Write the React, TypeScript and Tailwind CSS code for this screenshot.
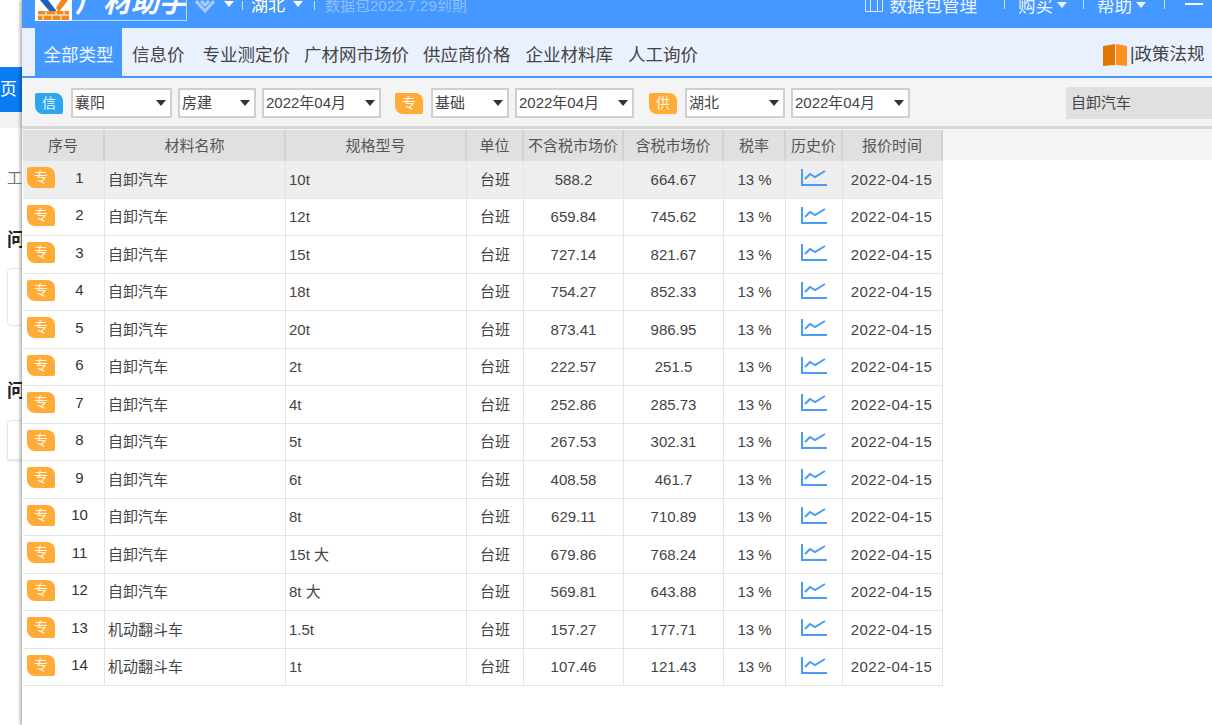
const FONT = "font-['Liberation_Sans','Noto_Sans_CJK_SC',sans-serif]";

const SPECS = [
  ["自卸汽车", "10t", "588.2", "664.67"],
  ["自卸汽车", "12t", "659.84", "745.62"],
  ["自卸汽车", "15t", "727.14", "821.67"],
  ["自卸汽车", "18t", "754.27", "852.33"],
  ["自卸汽车", "20t", "873.41", "986.95"],
  ["自卸汽车", "2t", "222.57", "251.5"],
  ["自卸汽车", "4t", "252.86", "285.73"],
  ["自卸汽车", "5t", "267.53", "302.31"],
  ["自卸汽车", "6t", "408.58", "461.7"],
  ["自卸汽车", "8t", "629.11", "710.89"],
  ["自卸汽车", "15t 大", "679.86", "768.24"],
  ["自卸汽车", "8t 大", "569.81", "643.88"],
  ["机动翻斗车", "1.5t", "157.27", "177.71"],
  ["机动翻斗车", "1t", "107.46", "121.43"],
];

function Badge({ label, color }: { label: string; color: string }) {
  return (
    <span
      className={`flex h-[21px] w-[28px] shrink-0 items-center justify-center rounded-tr-[8px] rounded-bl-[8px] rounded-tl-[2px] rounded-br-[2px] text-[14px] text-white/90 ${color}`}
    >
      {label}
    </span>
  );
}

function Select({ value, w }: { value: string; w: string }) {
  return (
    <div className={`flex h-[30px] items-center justify-between border-2 border-[#cfcfcf] bg-white pr-[4px] pl-[2px] text-[15px] text-[#444] ${w}`}>
      <span className="mt-[1px]">{value}</span>
      <span className="h-0 w-0 border-x-[5px] border-t-[6px] border-x-transparent border-t-[#333]" />
    </div>
  );
}

function TrendIcon() {
  return (
    <svg width="26" height="18" viewBox="0 0 26 18" fill="none" stroke="#4a9bf5">
      <path d="M1 0v16h25" strokeWidth="2" />
      <path d="M4 10l5-5 5 3 10-6" strokeWidth="2" />
    </svg>
  );
}

function Logo() {
  return (
    <div className="flex h-[21px] w-[37px] items-end justify-center bg-white">
      <svg width="33" height="21" viewBox="0 0 33 21">
        <path d="M3 0h8l10 13h-7z" fill="#1c5fc0" />
        <path d="M24 0h7l-9 12-3-4z" fill="#f08a1d" />
        <path d="M1 11h31v9H1z" fill="#f08a1d" />
        <path d="M1 15h31M9 11v4M19 11v4M27 11v4M6 15v5M15 15v5M24 15v5" stroke="#fff" strokeWidth="1" />
      </svg>
    </div>
  );
}

const HEAD = "flex items-center justify-center border-r-2 border-[#d2d2d2] pt-[1px]";
const CELL = "flex items-center border-r border-[#e4e4e4]";

export default function App() {
  return (
    <div className={`flex h-[725px] w-[1212px] overflow-hidden bg-white text-[#444] ${FONT}`}>
      {/* page behind the window */}
      <div className="flex w-[22px] shrink-0 flex-col overflow-hidden">
        <div className="h-[67px]" />
        <div className="flex h-[45px] items-center justify-end bg-[#0a7df5] pr-[5px] text-[17px] text-white">页</div>
        <div className="h-[16px] bg-[#f2f2f2]" />
        <div className="mt-[40px] h-[20px] pl-[7px] text-[15px] leading-[20px] whitespace-nowrap text-[#777]">工</div>
        <div className="mt-[40px] h-[24px] pl-[7px] text-[18px] leading-[24px] font-bold whitespace-nowrap text-[#222]">问</div>
        <div className="mt-[16px] ml-[7px] h-[58px] w-[40px] shrink-0 rounded-l border border-[#e5e5e5]" />
        <div className="mt-[53px] h-[24px] pl-[7px] text-[18px] leading-[24px] font-bold whitespace-nowrap text-[#222]">问</div>
        <div className="mt-[17px] ml-[7px] h-[40px] w-[40px] shrink-0 rounded-tl border border-[#e5e5e5] shadow" />
      </div>

      {/* main window */}
      <div className="flex min-w-0 flex-1 flex-col shadow-[-2px_0_3px_rgba(0,0,0,0.3)]">
        <header className="flex h-[28px] shrink-0 items-start overflow-hidden bg-[#4598ff] pl-[13px] text-white">
          <Logo />
          <div className="flex h-[21px] w-[115px] items-start overflow-hidden border-r border-b border-white/60 pl-[3px]">
            <span className="mt-[-11px] text-[28px] leading-[28px] font-bold whitespace-nowrap italic">广材助手</span>
          </div>
          <svg className="mt-[-1px] ml-[8px]" width="20" height="15" viewBox="0 0 20 15" fill="none" stroke="#a9cdfb" strokeWidth="3">
            <path d="M1 2l9 10 9-10M6 2l4 4 4-4" />
          </svg>
          <span className="mt-[1px] ml-[9px] h-0 w-0 border-x-[5px] border-t-[6px] border-x-transparent border-t-white" />
          <span className="mt-[1px] ml-[8px] h-[9px] w-px bg-white/70" />
          <span className="mt-[-4px] ml-[8px] text-[17px] leading-[20px]">湖北</span>
          <span className="mt-[1px] ml-[8px] h-0 w-0 border-x-[5px] border-t-[6px] border-x-transparent border-t-white" />
          <span className="mt-[1px] ml-[11px] h-[9px] w-px bg-white/70" />
          <span className="mt-[-4px] ml-[10px] text-[15px] leading-[20px] text-white/40">数据包2022.7.29到期</span>
          <div className="ml-auto flex items-start pr-[9px]">
            <svg className="mt-[-1px]" width="18" height="14" viewBox="0 0 18 14" fill="none" stroke="#fff" strokeOpacity="0.8">
              <path d="M.5 0v12.5h17V0M5.5 0v12.5M12.5 0v12.5" />
            </svg>
            <span className="mt-[-4px] ml-[7px] text-[17.5px] leading-[20px] text-white/90">数据包管理</span>
            <span className="mt-0 ml-[27px] h-[9px] w-px bg-white/70" />
            <span className="mt-[-4px] ml-[13px] text-[17.5px] leading-[20px] text-white/90">购买</span>
            <span className="mt-[2px] ml-[4px] h-0 w-0 border-x-[5px] border-t-[6px] border-x-transparent border-t-white/90" />
            <span className="mt-0 ml-[16px] h-[9px] w-px bg-white/70" />
            <span className="mt-[-4px] ml-[13px] text-[17.5px] leading-[20px] text-white/90">帮助</span>
            <span className="mt-[2px] ml-[4px] h-0 w-0 border-x-[5px] border-t-[6px] border-x-transparent border-t-white/90" />
            <span className="mt-0 ml-[18px] h-[9px] w-px bg-white/70" />
            <span className="mt-[3px] ml-[20px] h-[2px] w-[18px] bg-white" />
          </div>
        </header>

        <nav className="flex h-[50px] shrink-0 items-stretch overflow-hidden border-b-[2px] border-[#4598ff] bg-[#eaf1fe] pl-[13px] text-[17.5px] text-[#444]">
          <div className="flex w-[87px] items-center justify-center bg-[#4598ff] pt-[6px] text-white/90">全部类型</div>
          <div className="flex items-center gap-[15px] pt-[6px] pl-[10px]">
            <span className="mr-[3px] whitespace-nowrap">信息价</span>
            <span className="mr-[-1px] whitespace-nowrap">专业测定价</span>
            <span className="mr-[-1px] whitespace-nowrap">广材网市场价</span>
            <span className="whitespace-nowrap">供应商价格</span>
            <span className="whitespace-nowrap">企业材料库</span>
            <span className="whitespace-nowrap">人工询价</span>
          </div>
          <div className="ml-auto flex w-[110px] shrink-0 items-center pt-[4px]">
            <svg width="26" height="23" viewBox="0 0 26 23">
              <path d="M1 3l12-2v21l-12 1z" fill="#e07800" />
              <path d="M14 1l11 2v20l-11-1z" fill="#ff8f1f" />
            </svg>
            <span className="ml-[2px] whitespace-nowrap">|政策法规</span>
          </div>
        </nav>

        <div className="flex h-[51px] shrink-0 items-center border-b-[3px] border-[#d6d6d6] bg-[#f4f4f4] pt-[2px] pl-[13px]">
          <Badge label="信" color="bg-[#2aa7ee]" />
          <div className="ml-[8px] flex gap-[6px]">
            <Select value="襄阳" w="w-[101px]" />
            <Select value="房建" w="w-[78px]" />
            <Select value="2022年04月" w="w-[119px]" />
          </div>
          <div className="ml-[14px]"><Badge label="专" color="bg-[#ffab36]" /></div>
          <div className="ml-[8px] flex gap-[6px]">
            <Select value="基础" w="w-[78px]" />
            <Select value="2022年04月" w="w-[119px]" />
          </div>
          <div className="ml-[15px]"><Badge label="供" color="bg-[#ffab36]" /></div>
          <div className="ml-[8px] flex gap-[6px]">
            <Select value="湖北" w="w-[100px]" />
            <Select value="2022年04月" w="w-[119px]" />
          </div>
          <div className="ml-auto flex h-[32px] w-[146px] items-center bg-[#e0e0e0] pl-[5px] text-[15px]">自卸汽车</div>
        </div>

        <div className="flex h-[31px] shrink-0 bg-[#f4f4f4] pl-px">
          <div className="mt-[1px] flex h-[31px] bg-[#e0e0e0] text-[15px] text-[#555]">
            <div className={`${HEAD} w-[82px]`}>序号</div>
            <div className={`${HEAD} w-[181px]`}>材料名称</div>
            <div className={`${HEAD} w-[181px]`}>规格型号</div>
            <div className={`${HEAD} w-[57px]`}>单位</div>
            <div className={`${HEAD} w-[100px]`}>不含税市场价</div>
            <div className={`${HEAD} w-[100px]`}>含税市场价</div>
            <div className={`${HEAD} w-[62px]`}>税率</div>
            <div className={`${HEAD} w-[57px]`}>历史价</div>
            <div className={`${HEAD} w-[100px]`}>报价时间</div>
          </div>
        </div>

        <div className="flex flex-col pt-[1px] pl-px text-[15px] text-[#444]">
          {SPECS.map(([name, spec, excl, incl], i) => (
            <div key={i} className={`flex h-[37.5px] w-[920px] border-b border-[#e4e4e4] ${i === 0 ? "bg-[#eeeeee]" : "bg-white"}`}>
              <div className={`${CELL} w-[82px] pl-[4px]`}>
                <div className="mt-[-3px]"><Badge label="专" color="bg-[#ffab36]" /></div>
                <span className="mt-[-3px] flex-1 text-center text-[#333]">{i + 1}</span>
              </div>
              <div className={`${CELL} w-[181px] pt-[1px] pl-[3px]`}>{name}</div>
              <div className={`${CELL} w-[181px] pt-[1px] pl-[3px]`}>{spec}</div>
              <div className={`${CELL} w-[57px] justify-center pt-[1px]`}>台班</div>
              <div className={`${CELL} w-[100px] justify-center pt-[1px]`}>{excl}</div>
              <div className={`${CELL} w-[100px] justify-center pt-[1px]`}>{incl}</div>
              <div className={`${CELL} w-[62px] justify-center pt-[1px]`}>13 %</div>
              <div className={`${CELL} w-[57px] justify-center`}><div className="mt-[-2px]"><TrendIcon /></div></div>
              <div className={`${CELL} w-[100px] justify-center pt-[1px] pr-[2px] tracking-[0.5px]`}>2022-04-15</div>
            </div>
          ))}
        </div>
      </div>
    </div>
  );
}
